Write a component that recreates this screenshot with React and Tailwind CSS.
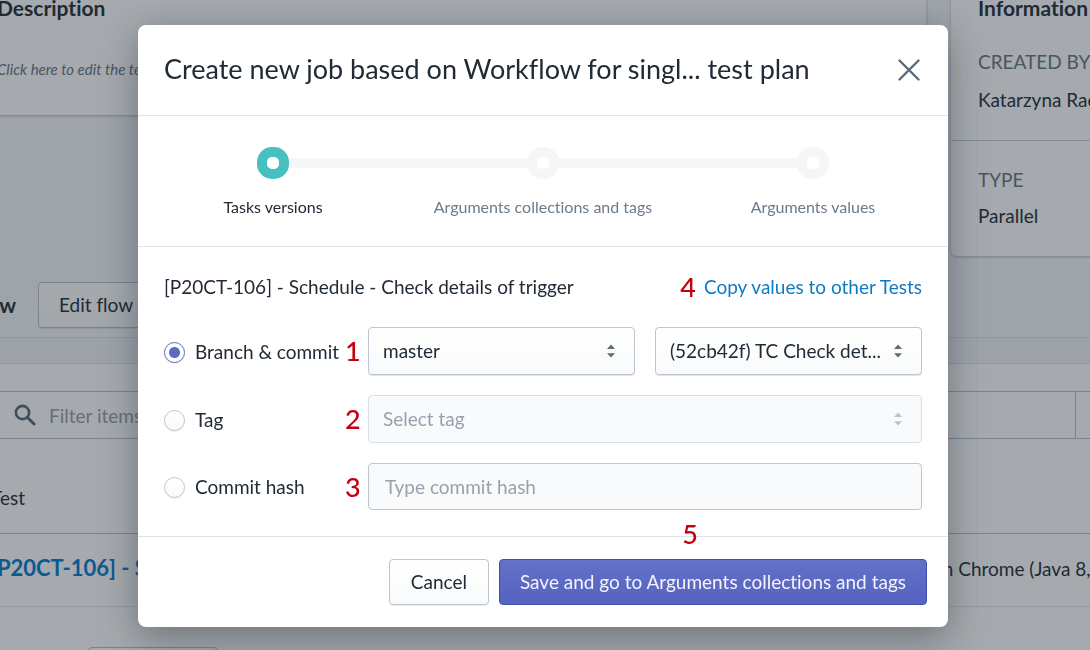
import React from "react";

const steps = [
  { label: "Tasks versions", active: true },
  { label: "Arguments collections and tags", active: false },
  { label: "Arguments values", active: false },
];

function Sorter({ muted }) {
  return (
    <svg
      viewBox="0 0 8 14"
      aria-hidden="true"
      className={
        "pointer-events-none absolute right-5 top-1/2 h-3.5 w-2 -translate-y-1/2 " +
        (muted ? "text-[#bcc3cb]" : "text-[#5c6c7c]")
      }
    >
      <path d="M4 0.4 L8 4.9 H0 Z M4 13.6 L8 9.3 H0 Z" fill="currentColor" />
    </svg>
  );
}

function Picker({ label, value, disabled }) {
  return (
    <div className="relative min-w-0 flex-1">
      <select
        aria-label={label}
        disabled={disabled}
        className={
          "block h-12 w-full appearance-none rounded-[4px] border pl-3.5 pr-10 text-[19px] opacity-100 " +
          (disabled
            ? "border-[#d9dee5] bg-[#f9fafc] text-[#97a2af]"
            : "border-[#bcc5d0] bg-linear-to-b from-white to-[#f9fafb] text-[#212b36] shadow-[0_1px_0_rgba(22,29,37,0.12)]")
        }
      >
        <option>{value}</option>
      </select>
      <Sorter muted={disabled} />
    </div>
  );
}

function Choice({ label, checked, mark, children }) {
  return (
    <div className="flex items-center">
      <label className="flex w-[174px] shrink-0 items-center gap-2.5 whitespace-nowrap pt-0.5 text-[19px] text-[#212b36]">
        <input
          type="radio"
          name="version"
          defaultChecked={checked}
          className="h-[21px] w-[21px] shrink-0 appearance-none rounded-full border border-[#bcc5d0] bg-linear-to-b from-white to-[#f9fafb] shadow-[0_1px_0_rgba(22,29,37,0.08)] checked:border-[#5c6ac4] checked:bg-[radial-gradient(circle,#5c6ac4_5px,white_6px)]"
        />
        {label}
      </label>
      <span className="w-[30px] shrink-0 pl-[7px] text-[27px] font-medium leading-8 text-[#c4000f]">{mark}</span>
      <div className="flex min-w-0 flex-1 gap-5">{children}</div>
    </div>
  );
}

function Page() {
  return (
    <div className="-mx-10 -mt-10 text-[19px] text-[#212b36]">
      <div className="flex h-[296px] items-start gap-[25px]">
        <section className="h-[155px] min-w-0 flex-1 bg-white pl-[37px] pt-[34px] shadow-[0_1px_3px_rgba(63,63,68,0.35)]">
          <h2 className="text-[21px] font-bold leading-7">Description</h2>
          <p className="mt-[35px] text-[15px] italic leading-6 text-[#637381]">Click here to edit the text</p>
        </section>
        <aside className="w-[179px] shrink-0 overflow-hidden whitespace-nowrap rounded-b-md bg-white pt-[34px] shadow-[0_1px_3px_rgba(63,63,68,0.35)]">
          <h2 className="px-[27px] text-[21px] font-bold leading-7">Information</h2>
          <dl>
            <div className="border-b border-[#c4cdd5] px-[27px] pb-[26px] pt-[26px]">
              <dt className="leading-7 text-[#637381]">CREATED BY</dt>
              <dd className="mt-2.5 leading-7">Katarzyna Rac</dd>
            </div>
            <div className="px-[27px] pb-[26px] pt-[25px]">
              <dt className="leading-7 text-[#637381]">TYPE</dt>
              <dd className="mt-2 leading-7">Parallel</dd>
            </div>
          </dl>
        </aside>
      </div>
      <div className="flex items-center gap-[22px] pb-[9px] pl-1 pt-[26px]">
        <h2 className="w-[52px] text-right text-[21px] font-bold">Flow</h2>
        <button
          type="button"
          className="h-[46px] rounded-[4px] border border-[#b4bfca] bg-linear-to-b from-white to-[#f9fafb] px-5 shadow-[0_1px_0_rgba(22,29,37,0.1)]"
        >
          Edit flow
        </button>
      </div>
      <div className="h-[27px] border-y border-[#dadfe6] bg-[#f2f4f8]" />
      <section className="bg-white pt-[27px]">
        <div className="flex h-12 items-center border-y border-[#b4bfca] pl-[54px]">
          <svg viewBox="0 0 22 22" className="h-[22px] w-[22px] shrink-0" fill="none" stroke="#566675" aria-hidden="true">
            <circle cx="8.5" cy="8.5" r="6.6" strokeWidth="2.6" />
            <path d="M13.5 13.5 L20 20" strokeWidth="3" strokeLinecap="round" />
          </svg>
          <input
            aria-label="Filter items"
            placeholder="Filter items"
            className="ml-[13px] h-full min-w-0 flex-1 border-r border-[#b4bfca] bg-transparent placeholder:text-[#919eab]"
          />
          <span className="w-[54px] shrink-0" />
        </div>
        <table className="w-full table-fixed border-collapse whitespace-nowrap text-left">
          <thead>
            <tr className="h-[94px] border-b border-[#b4bfca]">
              <th className="pl-[31px] pt-6 font-normal">Test</th>
              <th className="w-[198px]">
                <span className="sr-only">Configuration</span>
              </th>
            </tr>
          </thead>
          <tbody>
            <tr className="h-[73px] border-b border-[#dfe3e8]">
              <td className="overflow-hidden pl-[30px]">
                <a href="#test" className="block pb-1 text-[22px] font-bold leading-8 text-[#007ace]">
                  [P20CT-106] - Schedule
                </a>
              </td>
              <td className="overflow-hidden">on Chrome (Java 8, TestNG)</td>
            </tr>
          </tbody>
        </table>
        <div className="px-32 pt-10">
          <button type="button" className="h-[46px] w-[130px] rounded-[4px] border border-[#b4bfca] bg-white">
            Add test
          </button>
        </div>
      </section>
    </div>
  );
}

function Dialog() {
  return (
    <div className="fixed inset-0 flex items-start justify-center bg-[#212b34]/40 pr-1 pt-[25px]">
      <div
        role="dialog"
        aria-modal="true"
        aria-labelledby="dialog-title"
        className="w-full max-w-[810px] rounded-lg bg-white text-[#212b36] shadow-[0_20px_42px_rgba(32,42,53,0.25),0_2px_30px_rgba(32,42,53,0.22)]"
      >
        <header className="flex items-center justify-between border-b border-[#dfe5ea] pb-[26px] pl-[26px] pr-7 pt-6">
          <h1 id="dialog-title" className="text-[27px] leading-10">
            Create new job based on Workflow for singl... test plan
          </h1>
          <button type="button" aria-label="Close" className="pt-0.5 text-[#5a6b7b]">
            <svg viewBox="0 0 22 22" className="h-[22px] w-[22px]" fill="none" stroke="currentColor" strokeWidth="2.4" strokeLinecap="round">
              <path d="M1.5 1.5 L20.5 20.5 M20.5 1.5 L1.5 20.5" />
            </svg>
          </button>
        </header>

        <ol className="grid grid-cols-3 border-b border-[#dfe5ea] pb-[27px] pt-[31px]">
          {steps.map((step, i) => (
            <li key={step.label} className="flex flex-col items-center">
              <div className="flex w-full items-center">
                <span className={i === 0 ? "h-2.5 flex-1" : "h-2.5 flex-1 bg-[#f4f6f8]"} />
                <span
                  className={
                    "flex h-8 w-8 items-center justify-center rounded-[15px] " +
                    (step.active ? "bg-[#47c1bf]" : "bg-[#f4f6f8]")
                  }
                >
                  <span className="h-3 w-3 rounded-[5px] bg-white" />
                </span>
                <span className={i === 2 ? "h-2.5 flex-1" : "h-2.5 flex-1 bg-[#f4f6f8]"} />
              </div>
              <span className={"mt-4 text-[16px] leading-6 " + (step.active ? "text-[#212b36]" : "text-[#6b7b8a]")}>
                {step.label}
              </span>
            </li>
          ))}
        </ol>

        <form className="flex flex-col gap-5 px-[26px] pb-[26px] pt-[22px]">
          <div className="flex h-[38px] items-start justify-between">
            <h2 className="text-[19px] leading-9">[P20CT-106] - Schedule - Check details of trigger</h2>
            <div className="flex items-center gap-2">
              <span className="text-[27px] font-medium leading-9 text-[#c4000f]">4</span>
              <a href="#copy" className="text-[19px] leading-9 text-[#0f7ac4]">
                Copy values to other Tests
              </a>
            </div>
          </div>
          <Choice label="Branch & commit" mark="1" checked>
            <Picker label="Branch" value="master" />
            <Picker label="Commit" value="(52cb42f) TC Check det..." />
          </Choice>
          <Choice label="Tag" mark="2">
            <Picker label="Select tag" value="Select tag" disabled />
          </Choice>
          <Choice label="Commit hash" mark="3">
            <input
              aria-label="Type commit hash"
              placeholder="Type commit hash"
              className="h-[47px] w-full rounded-[4px] border border-[#bcc5d0] bg-[#f9fafc] px-4 text-[19px] placeholder:text-[#97a2af]"
            />
          </Choice>
        </form>

        <footer className="relative flex justify-end gap-2.5 border-t border-[#dfe3ee] px-[21px] py-[22px] text-[19px]">
          <span className="absolute -top-[19px] right-[250px] text-[27px] font-medium leading-8 text-[#c4000f]">5</span>
          <button
            type="button"
            className="h-[46px] rounded-[4px] border border-[#bcc5d0] bg-linear-to-b from-white to-[#f9fafb] px-[21px] shadow-[0_1px_0_rgba(22,29,37,0.08)]"
          >
            Cancel
          </button>
          <button
            type="button"
            className="h-[46px] rounded-[4px] border border-[#3f4eae] bg-linear-to-b from-[#6371c7] to-[#5563c1] px-5 text-[#f4f5fc]"
          >
            Save and go to Arguments collections and tags
          </button>
        </footer>
      </div>
    </div>
  );
}

export default function App() {
  return (
    <div className="flex h-screen flex-col overflow-hidden bg-[#f4f6fa] font-['Lato',sans-serif] [font-variant-ligatures:none]">
      <Page />
      <Dialog />
    </div>
  );
}
